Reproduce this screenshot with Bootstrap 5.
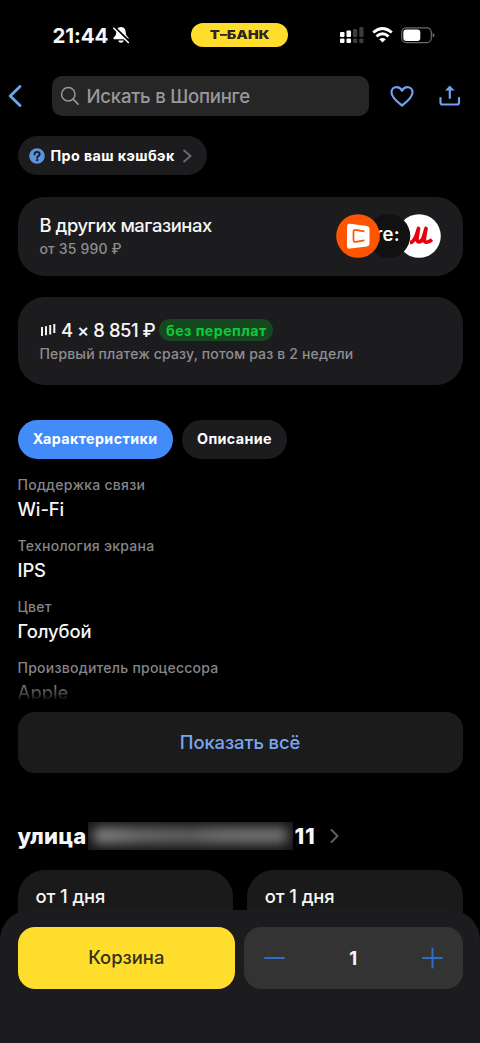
<!DOCTYPE html>
<html lang="ru">
<head>
<meta charset="utf-8">
<meta name="viewport" content="width=device-width, initial-scale=1">
<title>Шопинг</title>
<link href="https://cdn.jsdelivr.net/npm/bootstrap@5.3.0/dist/css/bootstrap.min.css" rel="stylesheet">
<style>
  body { background:#000; color:#f6f6f6; font-family:Inter,"Noto Sans",sans-serif; overflow:hidden; }
  svg { display:block; flex:none; }
  .screen { width:480px; height:1043px; }
  .scroller { height:910px; padding:0 17.5px; white-space:nowrap; }
  .statusbar { height:76px; padding:0 27.5px 6px 35px; }
  .clock { font-size:20.5px; font-weight:700; letter-spacing:-.1px; line-height:24px; width:59px; padding-top:1px; }
  .brand-pill { width:97px; height:24px; background:#ffdd2d; color:#2b2922; font-size:12px; font-weight:900; margin-left:61.5px; }
  .brand-pill span { transform:scaleX(1.2); }
  .searchbar { height:39.5px; margin-left:-11px; }
  .search-field { width:317px; height:39.5px; background:#262626; border-radius:10px; color:#98989d; font-size:18.6px; font-weight:500; letter-spacing:-.25px; padding-left:8px; margin-left:29px; }
  .search-field span { padding-top:2px; }
  .chip { height:39px; background:#1c1c1e; color:#fff; font-size:14.3px; font-weight:700; letter-spacing:.4px; border:0; padding:0; }
  .chip.current { background:#428bf9; }
  .panel { background:#1c1c1e; border-radius:27px; padding:0 22px; }
  .headline { font-size:18.4px; font-weight:500; line-height:24px; letter-spacing:-.1px; }
  .panel .headline { letter-spacing:-.45px; line-height:23px; }
  .muted { color:#8e8e93; font-size:14px; font-weight:500; letter-spacing:.25px; line-height:20px; }
  .panel .muted { letter-spacing:.15px; line-height:22px; padding-top:1px; margin-bottom:-1px; }
  .tag-green { background:#15481f; color:#10c93c; font-size:14.2px; font-weight:700; letter-spacing:.45px; height:22px; width:114px; margin-left:4px; }
  .specs { height:238px; margin-top:15px; overflow:hidden; }
  .spec { height:61.1px; }
  .spec .headline { color:#f6f6f6; line-height:27px; }
  .spec .muted { color:#858588; line-height:22px; }
  .fading .headline { background:linear-gradient(#777 20%,#444 55%,#000 80%); -webkit-background-clip:text; background-clip:text; color:transparent; }
  .wide-btn { height:61px; border-radius:17px; background:#1b1b1b; color:#77a7f1; font-size:18.4px; font-weight:500; letter-spacing:-.1px; border:0; padding:8px 0 6px; }
  .street { font-size:22px; font-weight:800; line-height:28px; margin-top:49px; letter-spacing:.15px; }
  .redacted { width:205px; height:28px; overflow:hidden; background:#161616; margin:0 2px 0 1px; padding:5px 5px 0; }
  .redacted i { display:block; height:17px; border-radius:7px; background:linear-gradient(90deg,#858585,#686868 25%,#606060 50%,#707070 65%,#727272); filter:blur(6px); }
  .house { width:24px; letter-spacing:.9px; }
  .slot { height:61px; border-radius:27px 27px 0 0; background:#1a1a1a; padding:14px 18px; }
  .sheet { position:relative; z-index:1; height:133px; background:#1c1c1e; border-radius:30px 30px 0 0; padding:17px 17.5px 0; gap:9px; }
  .buy, .stepper { height:61.5px; border-radius:17px; border:0; }
  .buy { background:#ffdd2d; color:#333018; font-size:18.4px; font-weight:500; padding:7px 0; }
  .stepper { background:#333; padding:0 20px; font-size:18.4px; font-weight:700; }
  .stepper span { padding-top:2px; }
</style>
</head>
<body>
<div class="screen d-flex flex-column">
  <main class="scroller">
    <header class="statusbar d-flex align-items-center">
      <span class="clock">21:44</span>
      <svg width="18" height="18" viewBox="0 0 18 18"><path d="M9 1C5.500 1 4.300 3.800 4.200 7c-.1 3-2.900 4-2.900 5.500 0 .6.4.8 1 .8h13.400c.6 0 1-.3 1-.8 0-1.500-2.800-2.500-2.900-5.500C13.700 3.800 12.500 1 9 1zM6.300 14.500h5.400C11.300 17.500 6.700 17.500 6.300 14.500z" fill="#fff"/><path d="M2.400.9L18 16" stroke="#000" stroke-width="2"/><path d="M1.300 1.700L16.800 17" stroke="#fff" stroke-width="1.500"/></svg>
      <span class="brand-pill rounded-pill d-flex align-items-center justify-content-center"><span>Т–БАНК</span></span>
      <svg class="ms-auto" width="96" height="18" viewBox="0 0 96 18">
        <g fill="#fff"><rect x="1" y="6" width="4.500" height="5" rx="1"/><rect x="1" y="12.500" width="4.500" height="4.500" rx="1"/><rect x="7.500" y="4.500" width="4.500" height="6.500" rx="1"/><rect x="7.500" y="12.500" width="4.500" height="4.500" rx="1"/></g>
        <g fill="#3c3c3c"><rect x="14" y="3" width="4.200" height="8" rx="1"/><rect x="14" y="12.500" width="4.200" height="4.500" rx="1"/><rect x="20.300" y="1" width="4.200" height="10" rx="1"/><rect x="20.300" y="12.500" width="4.200" height="4.500" rx="1"/></g>
        <g fill="none" stroke="#fff" stroke-width="2.800"><path d="M34.200 6.500q9.300-8 18.600 0"/><path d="M37.500 10.300q6-5 12 0"/></g><path d="M40.200 13.200q3.300-2.600 6.600 0L43.500 16.500z" fill="#fff"/>
        <rect x="62.700" y="1.900" width="29.600" height="14.700" rx="4.500" fill="none" stroke="#6c6c6c" stroke-width="1.200"/><rect x="64.300" y="3.500" width="17" height="11.500" rx="3" fill="#fff"/><path d="M93.700 6.800q3.400 2.300 0 4.700z" fill="#777"/>
      </svg>
    </header>

    <nav class="searchbar d-flex align-items-center">
      <svg width="16" height="24" viewBox="0 0 16 24"><path d="M13 2.500L3.200 12l9.800 9.500" fill="none" stroke="#6fa2f0" stroke-width="2.900" stroke-linecap="round" stroke-linejoin="round"/></svg>
      <div class="search-field d-flex align-items-center gap-2">
        <svg width="19" height="20" viewBox="0 0 19 20"><circle cx="8.300" cy="8.300" r="6.700" fill="none" stroke="#98989d" stroke-width="1.500"/><path d="M13 13l5 5.200" stroke="#98989d" stroke-width="1.700" stroke-linecap="round"/></svg>
        <span>Искать в Шопинге</span>
      </div>
      <svg style="margin-left:21px" width="24" height="22" viewBox="0 0 24 22"><path d="M12 20.500C6 16 1.500 12.200 1.500 7.500 1.500 4.200 3.800 2.200 6.500 2.200c2.600 0 4.400 1.500 5.500 3.500 1.100-2 2.900-3.500 5.500-3.500 2.700 0 5 2 5 5.300 0 4.700-4.500 8.500-10.500 13z" fill="none" stroke="#6fa2f0" stroke-width="2.200" stroke-linejoin="round"/></svg>
      <svg style="margin-left:25px" width="22" height="22" viewBox="0 0 22 22"><path d="M1.500 13v4.500q0 2 2 2h14.500q2 0 2-2V13M10.800 13V3" fill="none" stroke="#6fa2f0" stroke-width="2.200" stroke-linecap="round"/><path d="M6 5.600L10.800.6l4.800 5z" fill="#6fa2f0"/></svg>
    </nav>

    <button class="chip btn rounded-pill d-flex align-items-center" style="margin-top:20.500px;width:189.500px;padding:0 11.500px">
      <svg width="16" height="16" viewBox="0 0 16 16"><circle cx="8" cy="8" r="7.800" fill="#5c93df"/><path d="M5.500 6.400C5.500 3 10.700 3.100 10.700 6.100c0 2-2.500 1.900-2.500 3.600" fill="none" stroke="#15191f" stroke-width="1.900" stroke-linecap="round"/><circle cx="8.200" cy="12.100" r="1.200" fill="#15191f"/></svg>
      <span style="margin-left:5.500px">Про ваш кэшбэк</span>
      <svg class="ms-auto me-1" width="9" height="14" viewBox="0 0 9 14"><path d="M1.200 1.500L7.500 7l-6.300 5.500" fill="none" stroke="#6a6a6d" stroke-width="2" stroke-linecap="round" stroke-linejoin="round"/></svg>
    </button>

    <section class="panel d-flex align-items-center" style="margin-top:21.500px;height:79px">
      <div>
        <div class="headline">В других магазинах</div>
        <div class="muted">от 35 990 ₽</div>
      </div>
      <svg class="ms-auto" width="105" height="44" viewBox="0 0 105 44">
        <circle cx="83" cy="22" r="21.800" fill="#fff"/>
        <path d="M74 28.500C78 28.500 80.500 22 82.500 14.500L81 24.500c-.5 4.500 3.500 4.500 6 0L90 14.500 88.300 24.500c-.6 4.500 3.300 5 7.700 1.200" fill="none" stroke="#e8000f" stroke-width="3.700" stroke-linejoin="round"/>
        <circle cx="52.500" cy="22" r="21.800" fill="#111112"/><text x="39.300" y="27.300" font-size="18.500" font-weight="600" letter-spacing=".3" fill="#fff">re:</text>
        <circle cx="22" cy="22" r="21.800" fill="#ff5500"/><path d="M14 9.700l17 2.200q2.500.4 2.500 2.800v15q0 2.300-2.500 2.700l-17 2.200q-3 .3-3-2.800v-19.300q0-3.100 3-2.800z" fill="#fff"/><path d="M28.500 17.300l-9-1.500q-2-.2-2 1.800v8.500q0 2 2 1.800l9-1.500" fill="none" stroke="#ff5500" stroke-width="1.700"/>
      </svg>
    </section>

    <section class="panel d-flex flex-column justify-content-center" style="margin-top:21.500px;height:87.500px;padding-top:1px">
      <div class="headline d-flex align-items-center">
        <svg width="16" height="14" viewBox="0 0 16 14"><path d="M2 4v9M6 3.200v9M10.200 2v9.500M14.300 1v9" stroke="#f2f2f2" stroke-width="2"/></svg>
        <span style="margin-left:5.500px">4 × 8 851 ₽</span>
        <span class="tag-green rounded-pill d-inline-flex align-items-center justify-content-center">без переплат</span>
      </div>
      <div class="muted">Первый платеж сразу, потом раз в 2 недели</div>
    </section>

    <div class="d-flex" style="margin-top:35px;gap:9px">
      <button class="chip current btn rounded-pill" style="width:155.500px">Характеристики</button>
      <button class="chip btn rounded-pill" style="width:105px">Описание</button>
    </div>

    <section class="specs">
      <div class="spec"><div class="muted">Поддержка связи</div><div class="headline">Wi-Fi</div></div>
      <div class="spec"><div class="muted">Технология экрана</div><div class="headline">IPS</div></div>
      <div class="spec"><div class="muted">Цвет</div><div class="headline">Голубой</div></div>
      <div class="spec fading"><div class="muted">Производитель процессора</div><div class="headline">Apple</div></div>
    </section>
    <button class="wide-btn btn w-100 d-block">Показать всё</button>

    <div class="street d-flex align-items-center">
      <span style="width:69px">улица</span><span class="redacted"><i></i></span><span class="house">11</span>
      <svg style="margin-left:11px" width="9" height="14" viewBox="0 0 9 14"><path d="M1.500 1L7.500 7l-6 6" fill="none" stroke="#606063" stroke-width="2" stroke-linecap="round" stroke-linejoin="round"/></svg>
    </div>
    <div class="d-flex" style="gap:13.500px;margin-top:20px">
      <div class="slot headline flex-fill">от 1 дня</div>
      <div class="slot headline flex-fill">от 1 дня</div>
    </div>
  </main>

  <footer class="sheet d-flex">
    <button class="buy btn flex-fill w-50">Корзина</button>
    <div class="stepper flex-fill w-50 d-flex align-items-center justify-content-between">
      <svg width="21" height="22" viewBox="0 0 21 22"><path d="M1 11h19" stroke="#2c6fca" stroke-width="2" stroke-linecap="round"/></svg>
      <span>1</span>
      <svg width="21" height="22" viewBox="0 0 21 22"><path d="M1 11h19M10.500 1.500v19" stroke="#2c6fca" stroke-width="2" stroke-linecap="round"/></svg>
    </div>
  </footer>
</div>
<script src="https://cdn.jsdelivr.net/npm/bootstrap@5.3.0/dist/js/bootstrap.bundle.min.js"></script>
</body>
</html>
